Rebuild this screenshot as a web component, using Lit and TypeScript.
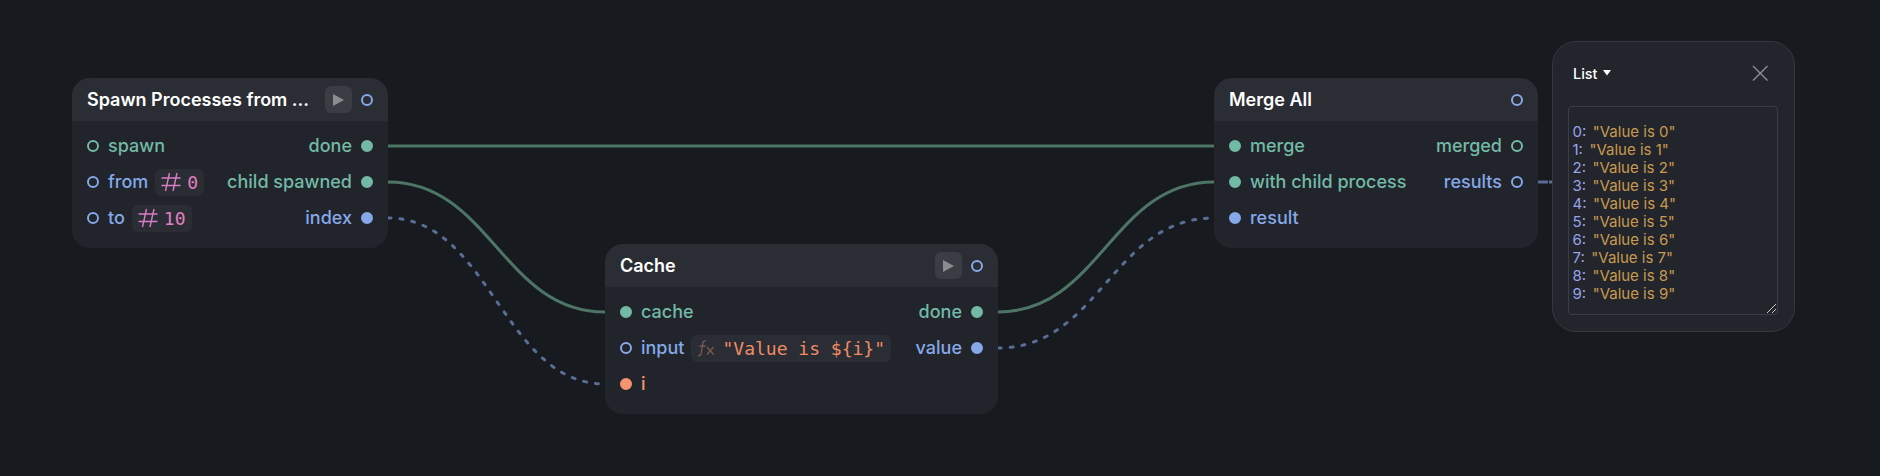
import { LitElement, html, css, svg } from "lit";
import { customElement } from "lit/decorators.js";

type Color = "green" | "blue" | "orange";
interface Row {
  label: string;
  color: Color;
  filled: boolean;
  chip?: { icon: "hash" | "fx"; value: string };
}
interface NodeData {
  title: string;
  x: number;
  y: number;
  w: number;
  run: boolean;
  left: Row[];
  right: Row[];
}

const nodes: NodeData[] = [
  {
    title: "Spawn Processes from ...", x: 72, y: 78, w: 316, run: true,
    left: [
      { label: "spawn", color: "green", filled: false },
      { label: "from", color: "blue", filled: false, chip: { icon: "hash", value: "0" } },
      { label: "to", color: "blue", filled: false, chip: { icon: "hash", value: "10" } },
    ],
    right: [
      { label: "done", color: "green", filled: true },
      { label: "child spawned", color: "green", filled: true },
      { label: "index", color: "blue", filled: true },
    ],
  },
  {
    title: "Cache", x: 605, y: 244, w: 393, run: true,
    left: [
      { label: "cache", color: "green", filled: true },
      { label: "input", color: "blue", filled: false, chip: { icon: "fx", value: '"Value is ${i}"' } },
      { label: "i", color: "orange", filled: true },
    ],
    right: [
      { label: "done", color: "green", filled: true },
      { label: "value", color: "blue", filled: true },
    ],
  },
  {
    title: "Merge All", x: 1214, y: 78, w: 324, run: false,
    left: [
      { label: "merge", color: "green", filled: true },
      { label: "with child process", color: "green", filled: true },
      { label: "result", color: "blue", filled: true },
    ],
    right: [
      { label: "merged", color: "green", filled: false },
      { label: "results", color: "blue", filled: false },
    ],
  },
];

const wires = [
  { d: "M388 146 L1214 146", c: "g" },
  { d: "M388 182 C490 182 503 312 605 312", c: "g" },
  { d: "M388 218 C490 218 503 384 605 384", c: "b" },
  { d: "M998 312 C1100 312 1112 182 1214 182", c: "g" },
  { d: "M998 348 C1100 348 1112 218 1214 218", c: "b" },
  { d: "M1538 182 L1552 182", c: "s" },
];

const listItems = Array.from({ length: 10 }, (_, i) => i);

@customElement("app-root")
export class AppRoot extends LitElement {
  static styles = css`
    :host {
      display: block;
      position: relative;
      width: 1880px;
      height: 476px;
      overflow: hidden;
      background: #171a1f;
      font-family: Inter, "Noto Sans", sans-serif;
    }
    .wires { position: absolute; inset: 0; width: 1880px; height: 476px; }
    .wires path { fill: none; stroke-width: 3; }
    .wires .g { stroke: #4d7566; }
    .wires .b { stroke: #5a6d94; stroke-dasharray: 3 9; stroke-linecap: round; }
    .wires .s { stroke: #5a6d94; stroke-dasharray: 10 1; }
    .node {
      position: absolute;
      box-sizing: border-box;
      height: 170px;
      border-radius: 18px;
      background: #21242b;
      overflow: hidden;
    }
    .head {
      display: flex;
      align-items: center;
      height: 43px;
      padding: 0 15px;
      background: #2a2d34;
      gap: 9px;
    }
    .title {
      flex: 1;
      color: #fff;
      font-size: 18px;
      font-weight: 600;
      white-space: nowrap;
    }
    .run {
      width: 27px;
      height: 27px;
      border-radius: 6px;
      background: #3a3d43;
      display: flex;
      align-items: center;
      justify-content: center;
    }
    .body {
      display: flex;
      justify-content: space-between;
      padding: 7px 15px 0;
    }
    .col { display: flex; flex-direction: column; }
    .col.r { align-items: flex-end; }
    .row {
      display: flex;
      align-items: center;
      height: 36px;
      gap: 9px;
      font-size: 18px;
      font-weight: 500;
      white-space: nowrap;
    }
    .label { padding-bottom: 1px; }
    .port {
      box-sizing: border-box;
      width: 12px;
      height: 12px;
      border-radius: 50%;
      border: 2px solid currentColor;
      flex: none;
    }
    .port.filled { background: currentColor; }
    .green { color: #72baa5; }
    .blue { color: #85a8e8; }
    .orange { color: #f49470; }
    .chip {
      display: flex;
      align-items: center;
      height: 27px;
      padding: 0 6px 0 6px;
      gap: 6px;
      margin-left: -2px;
      border-radius: 6px;
      background: #2a2d34;
      font-family: "DejaVu Sans Mono", "Liberation Mono", monospace;
      font-size: 18px;
      font-weight: 400;
    }
    .chip.hash { color: #e07fc0; }
    .chip.fx { color: #f08a66; gap: 7px; }
    .panel {
      position: absolute;
      left: 1552px;
      top: 41px;
      box-sizing: border-box;
      width: 243px;
      height: 291px;
      border: 1.5px solid #34373d;
      border-radius: 24px;
      background: #22252c;
      padding: 0 16px 0 15px;
    }
    .phead {
      display: flex;
      align-items: center;
      justify-content: space-between;
      height: 62px;
      padding: 0 10px 0 5px;
      box-sizing: border-box;
    }
    .ptitle {
      display: flex;
      align-items: center;
      gap: 6px;
      color: #fff;
      font-size: 14.4px;
      font-weight: 500;
    }
    .box {
      position: relative;
      box-sizing: border-box;
      height: 209px;
      margin-top: 1.5px;
      border: 1.5px solid #3a3d43;
      border-radius: 4px;
      padding: 16px 3.5px 0;
      font-size: 15px;
      line-height: 18px;
    }
    .li { display: flex; gap: 6.5px; white-space: nowrap; }
    .idx { color: #9aa2e8; }
    .val { color: #c99a4e; }
    .grip { position: absolute; right: 0; bottom: 0; }
  `;

  private port(color: Color, filled: boolean) {
    return html`<span class="port ${color} ${filled ? "filled" : ""}"></span>`;
  }

  private icon(kind: "hash" | "fx") {
    if (kind === "hash") {
      return html`<svg width="20" height="20" viewBox="0 0 20 20" fill="none" stroke="#d97cc6" stroke-width="1.4">
        <path d="M0.5 6H19.5M0.5 13.5H19.5M8.5 1L4.5 19M16 1L12 19" />
      </svg>`;
    }
    return html`<svg width="18" height="20" viewBox="0 0 18 20" fill="none" stroke="#7a5b50" stroke-width="1.3">
      <path d="M9 3C6.5 2.5 6 4 5.6 6.5L4.2 15C3.8 17.5 3 18 1 17.5M2.5 8H8.5M10 9L16.5 16.5M16.5 9L10 16.5" />
    </svg>`;
  }

  private renderRow(r: Row, right: boolean) {
    const text = html`<span class="label ${r.color}">${r.label}</span>`;
    const chip = r.chip
      ? html`<span class="chip ${r.chip.icon}">${this.icon(r.chip.icon)}<span>${r.chip.value}</span></span>`
      : "";
    return right
      ? html`<div class="row">${text}${this.port(r.color, r.filled)}</div>`
      : html`<div class="row">${this.port(r.color, r.filled)}${text}${chip}</div>`;
  }

  render() {
    return html`
      <svg class="wires" viewBox="0 0 1880 476">
        ${wires.map((w) => svg`<path class=${w.c} d=${w.d}></path>`)}
      </svg>
      ${nodes.map(
        (n) => html`
          <div class="node" style="left:${n.x}px;top:${n.y}px;width:${n.w}px">
            <div class="head">
              <span class="title">${n.title}</span>
              ${n.run
                ? html`<span class="run"><svg width="11" height="12" viewBox="0 0 11 12"><path d="M0 0L11 6L0 12Z" fill="#8a8c8f"/></svg></span>`
                : ""}
              ${this.port("blue", false)}
            </div>
            <div class="body">
              <div class="col">${n.left.map((r) => this.renderRow(r, false))}</div>
              <div class="col r">${n.right.map((r) => this.renderRow(r, true))}</div>
            </div>
          </div>
        `
      )}
      <div class="panel">
        <div class="phead">
          <span class="ptitle">List <svg width="8" height="6" viewBox="0 0 8 6"><path d="M0 0H8L4 5.5Z" fill="#fff"/></svg></span>
          <svg width="16" height="16" viewBox="0 0 16 16" fill="none" stroke="#8d8f93" stroke-width="1.4"><path d="M1 1L15.5 15.5M15.5 1L1 15.5"/></svg>
        </div>
        <div class="box">
          ${listItems.map(
            (i) => html`<div class="li"><span class="idx">${i}:</span><span class="val">"Value is ${i}"</span></div>`
          )}
          <svg class="grip" width="11" height="11" viewBox="0 0 11 11" fill="none" stroke="#c8c8c8" stroke-width="1"><path d="M1 10L10 1M6 10L10 6"/></svg>
        </div>
      </div>
    `;
  }
}
